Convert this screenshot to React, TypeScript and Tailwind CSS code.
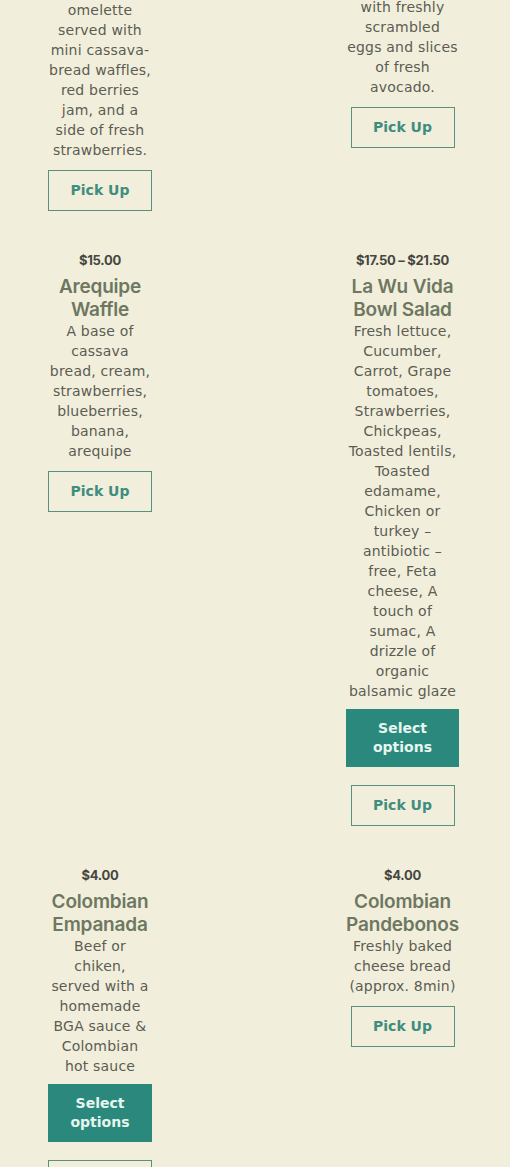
import React from "react";
import clsx from "clsx";

type Product = {
  price?: string;
  title?: string;
  description: string;
  hasOptions?: boolean;
};

const rows: Product[][] = [
  [
    {
      description:
        "omelette served with mini cassava-bread waffles, red berries jam, and a side of fresh strawberries.",
    },
    {
      description: "with freshly scrambled eggs and slices of fresh avocado.",
    },
  ],
  [
    {
      price: "$15.00",
      title: "Arequipe Waffle",
      description: "A base of cassava bread, cream, strawberries, blueberries, banana, arequipe",
    },
    {
      price: "$17.50 – $21.50",
      title: "La Wu Vida Bowl Salad",
      description:
        "Fresh lettuce, Cucumber, Carrot, Grape tomatoes, Strawberries, Chickpeas, Toasted lentils, Toasted edamame, Chicken or turkey – antibiotic – free, Feta cheese, A touch of sumac, A drizzle of organic balsamic glaze",
      hasOptions: true,
    },
  ],
  [
    {
      price: "$4.00",
      title: "Colombian Empanada",
      description: "Beef or chiken, served with a homemade BGA sauce & Colombian hot sauce",
      hasOptions: true,
    },
    {
      price: "$4.00",
      title: "Colombian Pandebonos",
      description: "Freshly baked cheese bread (approx. 8min)",
    },
  ],
];

function ProductCard({ product, className }: { product: Product; className?: string }) {
  const { price, title, description, hasOptions } = product;
  return (
    <div className={clsx("flex flex-col items-center text-center", className)}>
      {price && (
        <span className="font-['Inter',sans-serif] text-[13px] leading-[20px] font-bold tracking-[-0.3px] text-[#46463f]">
          {price}
        </span>
      )}
      {title && (
        <h2 className="mt-[5px] w-full font-['Inter',sans-serif] text-[19px] leading-[23px] font-semibold tracking-[-0.2px] text-[#6e7761]">
          {title}
        </h2>
      )}
      <p className="mb-2 w-full font-['DejaVu_Sans',sans-serif] text-[14px] leading-[20px] tracking-[0.2px] text-[#5c5c53]">
        {description}
      </p>
      {hasOptions && (
        <button className="mb-[16px] w-full bg-[#2a897c] px-4 py-[10px] font-['DejaVu_Sans',sans-serif] text-[14px] leading-[19px] font-bold text-[#e6f6ee]">
          Select options
        </button>
      )}
      <div className="pt-[2px]">
        <button className="w-[104px] border border-[#5a8f7e] py-[10px] font-['DejaVu_Sans',sans-serif] text-[14px] leading-[19px] font-bold text-[#3f8d7f]">
          Pick Up
        </button>
      </div>
    </div>
  );
}

export default function App() {
  return (
    <div className="min-h-screen overflow-hidden bg-[#f1efdc]">
      <div className="grid grid-cols-[104px_113px] gap-x-[194px] gap-y-[39px] pl-[48px]">
        {rows.map((row, i) =>
          row.map((product, j) => (
            <ProductCard
              key={`${i}-${j}`}
              product={product}
              className={i === 0 && j === 1 ? "-mt-[3px]" : undefined}
            />
          ))
        )}
      </div>
    </div>
  );
}
